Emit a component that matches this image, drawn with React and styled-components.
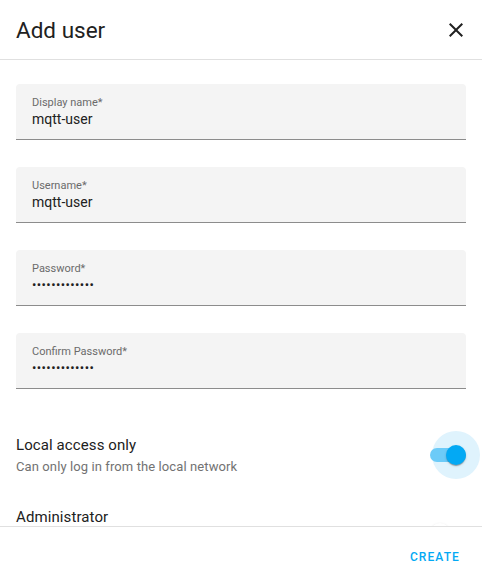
import React from "react";
import styled, { createGlobalStyle } from "styled-components";

const GlobalStyle = createGlobalStyle`
  html, body {
    margin: 0;
    padding: 0;
    background: #ffffff;
  }
  body {
    font-family: Roboto, "Noto Sans", sans-serif;
    -webkit-font-smoothing: antialiased;
  }
  * {
    box-sizing: border-box;
  }
`;

const Dialog = styled.div`
  width: 482px;
  height: 575px;
  display: flex;
  flex-direction: column;
  background: #ffffff;
  overflow: hidden;
`;

const Header = styled.div`
  height: 60px;
  flex-shrink: 0;
  display: flex;
  align-items: center;
  justify-content: space-between;
  padding: 0 2px 0 16px;
  border-bottom: 1px solid #e0e0e0;
`;

const Title = styled.h2`
  margin: 0;
  font-size: 22.5px;
  font-weight: 400;
  color: #212121;
  letter-spacing: 0;
`;

const IconButton = styled.button`
  width: 48px;
  height: 48px;
  border: none;
  background: transparent;
  padding: 0;
  display: flex;
  align-items: center;
  justify-content: center;
  color: #212121;
  cursor: pointer;
`;

const Content = styled.div`
  flex: 1;
  min-height: 0;
  overflow: hidden;
  padding: 24px 16px 0;
  display: flex;
  flex-direction: column;
  gap: 27px;
`;

const Field = styled.label`
  display: block;
  flex-shrink: 0;
  height: 56px;
  padding: 12px 16px 0;
  background: #f4f4f4;
  border-radius: 4px 4px 0 0;
  border-bottom: 1px solid #8c8c8c;
`;

const FieldLabel = styled.span`
  display: block;
  font-size: 11px;
  line-height: 14px;
  color: #6b6b6b;
`;

const FieldInput = styled.input`
  display: block;
  width: 100%;
  height: 18px;
  margin: 0;
  padding: 0;
  border: none;
  outline: none;
  background: transparent;
  font-family: inherit;
  font-size: ${(p) => (p.type === "password" ? "13px" : "14px")};
  line-height: 18px;
  color: #212121;
  letter-spacing: ${(p) => (p.type === "password" ? "0.4px" : "0")};
`;

const Settings = styled.div`
  flex-shrink: 0;
  margin-top: 4px;
  display: flex;
  flex-direction: column;
`;

const SettingRow = styled.div`
  height: 72px;
  flex-shrink: 0;
  display: flex;
  align-items: flex-start;
  justify-content: space-between;
`;

const SettingText = styled.div`
  display: flex;
  flex-direction: column;
  padding-top: 14px;
`;

const Primary = styled.span`
  font-size: 15px;
  line-height: 22px;
  color: #212121;
  letter-spacing: 0.1px;
`;

const Secondary = styled.span`
  font-size: 13px;
  line-height: 22px;
  color: #727272;
  letter-spacing: 0.1px;
`;

const Switch = styled.div`
  position: relative;
  width: 36px;
  height: 14px;
  flex-shrink: 0;
  margin-top: ${(p) => p.offset}px;
`;

const Track = styled.div`
  width: 36px;
  height: 14px;
  border-radius: 7px;
  background: ${(p) => (p.on ? "#6ccbf8" : "#9e9e9e")};
  opacity: ${(p) => (p.on ? 1 : 0.38)};
`;

const Halo = styled.div`
  position: absolute;
  top: -17px;
  left: ${(p) => (p.on ? "2px" : "-14px")};
  width: 48px;
  height: 48px;
  border-radius: 50%;
  background: #dff3fd;
  z-index: 0;
`;

const Thumb = styled.div`
  position: absolute;
  top: -3px;
  left: ${(p) => (p.on ? "16px" : "0")};
  width: 20px;
  height: 20px;
  border-radius: 50%;
  background: ${(p) => (p.on ? "#03a9f4" : "#ffffff")};
  box-shadow: 0 2px 1px -1px rgba(0, 0, 0, 0.2), 0 1px 1px 0 rgba(0, 0, 0, 0.14),
    0 1px 3px 0 rgba(0, 0, 0, 0.12);
  z-index: 2;
`;

const TrackLayer = styled.div`
  position: relative;
  z-index: 1;
`;

const Footer = styled.div`
  height: 49px;
  flex-shrink: 0;
  display: flex;
  align-items: flex-start;
  justify-content: flex-end;
  padding: 15px 14px 0 0;
  border-top: 1px solid #e0e0e0;
`;

const TextButton = styled.button`
  border: none;
  background: transparent;
  padding: 8px;
  font-family: inherit;
  font-size: 12px;
  line-height: 14px;
  font-weight: 500;
  letter-spacing: 1.1px;
  text-transform: uppercase;
  color: #03a9f4;
  cursor: pointer;
`;

const fields = [
  { label: "Display name*", value: "mqtt-user", type: "text" },
  { label: "Username*", value: "mqtt-user", type: "text" },
  { label: "Password*", value: "mqttpassword1", type: "password" },
  { label: "Confirm Password*", value: "mqttpassword1", type: "password" },
];

function ToggleSwitch({ on, halo, offset }) {
  return (
    <Switch offset={offset}>
      {halo && <Halo on={on} />}
      <TrackLayer>
        <Track on={on} />
      </TrackLayer>
      <Thumb on={on} />
    </Switch>
  );
}

export default function App() {
  return (
    <>
      <GlobalStyle />
      <Dialog>
        <Header>
          <Title>Add user</Title>
          <IconButton aria-label="Close">
            <svg width="24" height="24" viewBox="0 0 24 24">
              <path
                fill="currentColor"
                d="M19,6.41L17.59,5L12,10.59L6.41,5L5,6.41L10.59,12L5,17.59L6.41,19L12,13.41L17.59,19L19,17.59L13.41,12L19,6.41Z"
              />
            </svg>
          </IconButton>
        </Header>

        <Content>
          {fields.map((f) => (
            <Field key={f.label}>
              <FieldLabel>{f.label}</FieldLabel>
              <FieldInput type={f.type} defaultValue={f.value} readOnly />
            </Field>
          ))}

          <Settings>
            <SettingRow>
              <SettingText>
                <Primary>Local access only</Primary>
                <Secondary>Can only log in from the local network</Secondary>
              </SettingText>
              <ToggleSwitch on halo offset={28} />
            </SettingRow>
            <SettingRow>
              <SettingText>
                <Primary>Administrator</Primary>
              </SettingText>
              <ToggleSwitch on={false} offset={34} />
            </SettingRow>
          </Settings>
        </Content>

        <Footer>
          <TextButton>Create</TextButton>
        </Footer>
      </Dialog>
    </>
  );
}
